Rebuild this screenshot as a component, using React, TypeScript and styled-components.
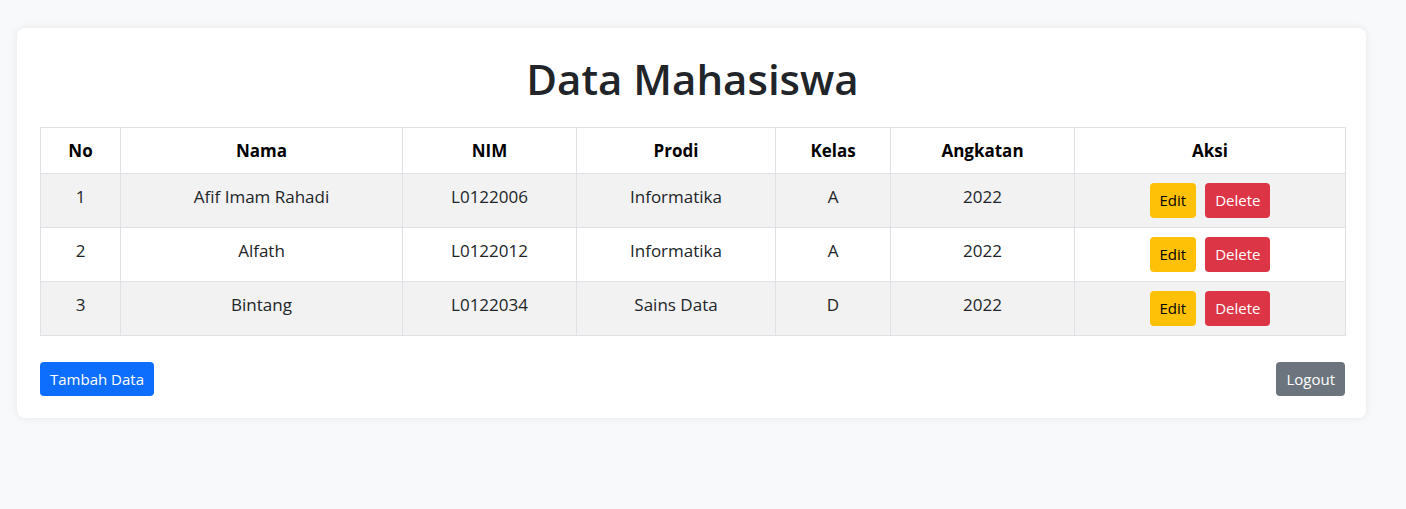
import styled, { createGlobalStyle } from "styled-components";

const GlobalStyle = createGlobalStyle`
   * {
      box-sizing: border-box;
   }
   body {
      margin: 0;
      background: #f8f9fa;
      font-family: "Segoe UI", "Open Sans", "Noto Sans", sans-serif;
      color: #212529;
   }
`;

interface Mahasiswa {
   nama: string;
   nim: string;
   prodi: string;
   kelas: string;
   angkatan: string;
}

const data: Mahasiswa[] = [
   { nama: "Afif Imam Rahadi", nim: "L0122006", prodi: "Informatika", kelas: "A", angkatan: "2022" },
   { nama: "Alfath", nim: "L0122012", prodi: "Informatika", kelas: "A", angkatan: "2022" },
   { nama: "Bintang", nim: "L0122034", prodi: "Sains Data", kelas: "D", angkatan: "2022" },
];

const columns = [
   { label: "No", width: 80 },
   { label: "Nama", width: 282 },
   { label: "NIM", width: 174 },
   { label: "Prodi", width: 199 },
   { label: "Kelas", width: 115 },
   { label: "Angkatan", width: 184 },
   { label: "Aksi", width: 271 },
];

const App = () => {
   return (
      <>
         <GlobalStyle />
         <Page>
            <Card>
               <Title>Data Mahasiswa</Title>
               <Table>
                  <colgroup>
                     {columns.map((c) => (
                        <col key={c.label} style={{ width: c.width }} />
                     ))}
                  </colgroup>
                  <thead>
                     <tr>
                        {columns.map((c) => (
                           <Th key={c.label}>{c.label}</Th>
                        ))}
                     </tr>
                  </thead>
                  <tbody>
                     {data.map((m, i) => (
                        <Row key={m.nim} $striped={i % 2 === 0}>
                           <Td>{i + 1}</Td>
                           <Td>{m.nama}</Td>
                           <Td>{m.nim}</Td>
                           <Td>{m.prodi}</Td>
                           <Td>{m.kelas}</Td>
                           <Td>{m.angkatan}</Td>
                           <Td>
                              <Actions>
                                 <Button $variant="warning">Edit</Button>
                                 <Button $variant="danger">Delete</Button>
                              </Actions>
                           </Td>
                        </Row>
                     ))}
                  </tbody>
               </Table>
               <Footer>
                  <FooterButton $variant="primary">Tambah Data</FooterButton>
                  <FooterButton $variant="secondary">Logout</FooterButton>
               </Footer>
            </Card>
         </Page>
      </>
   );
};

export default App;

const Page = styled.div`
   padding: 28px 0 0 17px;
   min-height: 509px;
`;

const Card = styled.div`
   width: 1349px;
   background: #fff;
   border-radius: 8px;
   box-shadow: 0 0 8px rgba(0, 0, 0, 0.08);
   padding: 26px 21px 22px 23px;
`;

const Title = styled.h1`
   margin: 0 0 23px;
   text-align: center;
   font-size: 42px;
   font-weight: 600;
   line-height: 1.2;
   color: #212529;
`;

const Table = styled.table`
   width: 1305px;
   border-collapse: collapse;
   table-layout: fixed;
   font-size: 17px;
`;

const Th = styled.th`
   height: 46px;
   padding: 0 8px;
   border: 1px solid #dee2e6;
   font-weight: 700;
   font-size: 17px;
   color: #000;
   text-align: center;
   vertical-align: middle;
`;

const Row = styled.tr<{ $striped: boolean }>`
   background: ${(p) => (p.$striped ? "#f2f2f2" : "#fff")};
`;

const Td = styled.td`
   height: 54px;
   padding: 9px 8px;
   border: 1px solid #dee2e6;
   text-align: center;
   vertical-align: top;
   line-height: 28px;
   color: #212529;
`;

const Actions = styled.div`
   display: flex;
   justify-content: center;
   gap: 9px;
`;

const palette = {
   warning: { bg: "#ffc107", fg: "#000" },
   danger: { bg: "#dc3545", fg: "#fff" },
   primary: { bg: "#0d6efd", fg: "#fff" },
   secondary: { bg: "#6c757d", fg: "#fff" },
};

const Button = styled.button<{ $variant: keyof typeof palette }>`
   height: 35px;
   padding: 0 10px;
   border: none;
   border-radius: 4px;
   font-family: inherit;
   font-size: 15px;
   line-height: 1;
   background: ${(p) => palette[p.$variant].bg};
   color: ${(p) => palette[p.$variant].fg};
   cursor: pointer;
`;

const FooterButton = styled(Button)`
   height: 34px;
`;

const Footer = styled.div`
   display: flex;
   justify-content: space-between;
   margin-top: 26px;
`;
